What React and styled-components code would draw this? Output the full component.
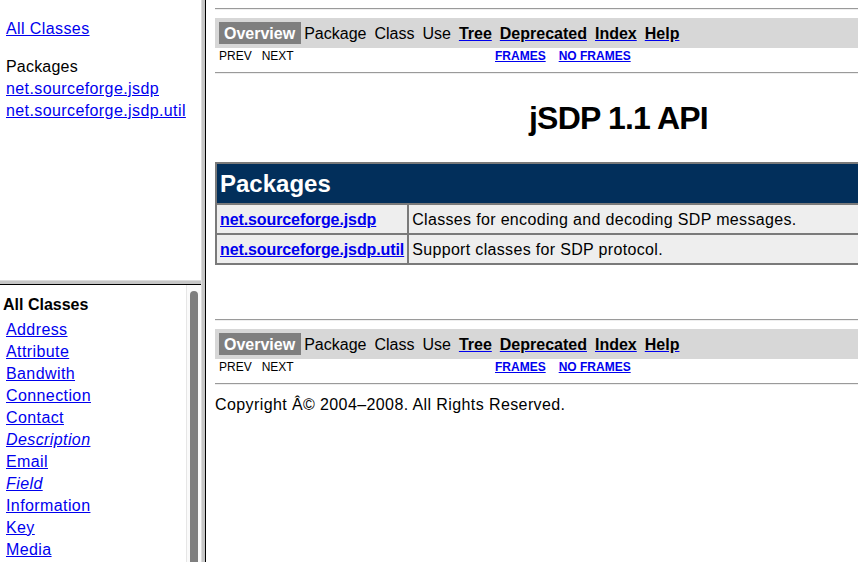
import React from "react"
import styled, { createGlobalStyle } from "styled-components"

const GlobalStyle = createGlobalStyle`
	html, body {
		margin: 0;
		padding: 0;
		background: #ffffff;
		font-family: "Liberation Sans", Arial, Helvetica, sans-serif;
		color: #000000;
	}
`

const packages = [
	{ name: "net.sourceforge.jsdp", desc: "Classes for encoding and decoding SDP messages." },
	{ name: "net.sourceforge.jsdp.util", desc: "Support classes for SDP protocol." },
]

const classes = [
	{ name: "Address" },
	{ name: "Attribute" },
	{ name: "Bandwith" },
	{ name: "Connection" },
	{ name: "Contact" },
	{ name: "Description", iface: true },
	{ name: "Email" },
	{ name: "Field", iface: true },
	{ name: "Information" },
	{ name: "Key" },
	{ name: "Media" },
]

const navLinks = ["Tree", "Deprecated", "Index", "Help"]

function NavBlock() {
	return (
		<>
			<NavBar>
				<NavItem $active>Overview</NavItem>
				<NavItem>Package</NavItem>
				<NavItem>Class</NavItem>
				<NavItem>Use</NavItem>
				{navLinks.map((l) => (
					<NavItem key={l}>
						<NavLink href="#">
							<span>{l}</span>
						</NavLink>
					</NavItem>
				))}
			</NavBar>
			<SubRow>
				<SubCell>
					<span>PREV</span>
					<SubGap />
					<span>NEXT</span>
				</SubCell>
				<SubCell>
					<SubLink href="#">FRAMES</SubLink>
					<SubGap $wide />
					<SubLink href="#">NO FRAMES</SubLink>
				</SubCell>
			</SubRow>
		</>
	)
}

export default function App() {
	return (
		<>
			<GlobalStyle />
			<Frames>
				<LeftColumn>
					<TopPane>
						<PaneLink href="#">All Classes</PaneLink>
						<PaneTitle>Packages</PaneTitle>
						{packages.map((p) => (
							<PaneLink key={p.name} href="#">
								{p.name}
							</PaneLink>
						))}
					</TopPane>
					<HDivider />
					<BottomPane>
						<ClassList>
							<ListHeading>All Classes</ListHeading>
							{classes.map((c) => (
								<PaneLink key={c.name} href="#" $italic={c.iface}>
									{c.name}
								</PaneLink>
							))}
						</ClassList>
						<ScrollTrack>
							<ScrollThumb />
						</ScrollTrack>
					</BottomPane>
				</LeftColumn>
				<VDivider />
				<RightFrame>
					<Page>
						<Rule />
						<NavBlock />
						<Rule $gap="9px" />
						<Title>jSDP 1.1 API</Title>
						<PackageTable>
							<thead>
								<tr>
									<HeadCell colSpan={2}>Packages</HeadCell>
								</tr>
							</thead>
							<tbody>
								{packages.map((p) => (
									<tr key={p.name}>
										<NameCell>
											<TableLink href="#">{p.name}</TableLink>
										</NameCell>
										<DescCell>{p.desc}</DescCell>
									</tr>
								))}
							</tbody>
						</PackageTable>
						<Rule $gap="54px" />
						<NavBlock />
						<Rule $gap="9px" />
						<Copyright>Copyright Â© 2004–2008. All Rights Reserved.</Copyright>
					</Page>
				</RightFrame>
			</Frames>
		</>
	)
}

const Frames = styled.div`
	display: grid;
	grid-template-columns: 201px 4px 1fr;
	height: 100vh;
	overflow: hidden;
`

const LeftColumn = styled.div`
	display: flex;
	flex-direction: column;
	min-height: 0;
	overflow: hidden;
`

const TopPane = styled.div`
	height: 280px;
	box-sizing: border-box;
	padding: 18px 0 0 6px;
	display: flex;
	flex-direction: column;
	align-items: flex-start;

	a:first-child {
		margin-bottom: 16px;
	}
`

const PaneLink = styled.a`
	font-size: 16px;
	line-height: 22px;
	letter-spacing: 0.4px;
	color: #0000ee;
	text-decoration: underline;
	font-style: ${(p) => (p.$italic ? "italic" : "normal")};
	white-space: nowrap;
`

const PaneTitle = styled.div`
	font-size: 16px;
	line-height: 22px;
	letter-spacing: 0.2px;
`

const HDivider = styled.div`
	height: 4px;
	background: #c6c6c6;
	border-top: 1px solid #dcdcdc;
	box-sizing: border-box;
`

const BottomPane = styled.div`
	flex: 1;
	min-height: 0;
	border-top: 1px solid #000000;
	display: flex;
	overflow: hidden;
`

const ClassList = styled.div`
	flex: 1;
	padding: 9px 0 0 6px;
	display: flex;
	flex-direction: column;
	align-items: flex-start;
`

const ListHeading = styled.div`
	font-size: 16px;
	font-weight: bold;
	line-height: 22px;
	margin: 0 0 3px -3px;
`

const ScrollTrack = styled.div`
	width: 15px;
	background: #fafafa;
	border-left: 1px solid #e6e6e6;
	box-sizing: border-box;
	padding: 6px 3px 0 3px;
	display: flex;
`

const ScrollThumb = styled.div`
	flex: 1;
	background: #7f7f7f;
	border-radius: 4px 4px 0 0;
`

const VDivider = styled.div`
	background: #c6c6c6;
	border-left: 1px solid #dcdcdc;
`

const RightFrame = styled.div`
	border-left: 1px solid #000000;
	overflow: hidden;
	padding: 8px 0 0 9px;
`

const Page = styled.div`
	width: 807px;
`

const Rule = styled.div`
	height: 2px;
	box-sizing: border-box;
	border-top: 1px solid #9a9a9a;
	border-bottom: 1px solid #eeeeee;
	margin-top: ${(p) => p.$gap || "0"};
	margin-bottom: 8px;
`

const NavBar = styled.div`
	display: flex;
	align-items: center;
	height: 30px;
	padding-left: 4px;
	background: #d7d7d7;
	font-size: 16px;
`

const NavItem = styled.div`
	padding: ${(p) => (p.$active ? "0 6px 0 5px" : "0 4px")};
	height: 22px;
	line-height: 24px;
	background: ${(p) => (p.$active ? "#7f7f7f" : "transparent")};
	color: ${(p) => (p.$active ? "#ffffff" : "#000000")};
	font-weight: ${(p) => (p.$active ? "bold" : "normal")};
	margin-right: ${(p) => (p.$active ? "-1px" : "0")};
`

const NavLink = styled.a`
	color: #0000ee;
	font-weight: bold;
	text-decoration: underline;

	span {
		color: #000000;
	}
`

const SubRow = styled.div`
	display: grid;
	grid-template-columns: 276px 1fr;
	height: 15px;
	line-height: 17px;
	font-size: 12px;
`

const SubCell = styled.div`
	padding-left: 4px;
	white-space: nowrap;
`

const SubGap = styled.span`
	display: inline-block;
	width: ${(p) => (p.$wide ? "13px" : "10px")};
`

const SubLink = styled.a`
	color: #0000ee;
	font-weight: bold;
	text-decoration: underline;
`

const Title = styled.h1`
	margin: 26px 0 25px;
	text-align: center;
	font-size: 32px;
	line-height: 37px;
	font-weight: bold;
	letter-spacing: -0.8px;
`

const PackageTable = styled.table`
	width: 100%;
	border-collapse: collapse;
	border: 2px solid #7a7a7a;
	font-size: 16px;

	td, th {
		border: 2px solid #7a7a7a;
	}
`

const HeadCell = styled.th`
	background: #022f5b;
	color: #ffffff;
	text-align: left;
	font-size: 24px;
	font-weight: bold;
	line-height: 28px;
	padding: 6px 3px 5px;
`

const NameCell = styled.td`
	width: 1%;
	white-space: nowrap;
	background: #eeeeee;
	padding: 4px 3px 3px;
	line-height: 21px;
`

const DescCell = styled.td`
	background: #eeeeee;
	padding: 4px 3px 3px;
	line-height: 21px;
	letter-spacing: 0.33px;
`

const TableLink = styled.a`
	color: #0000ee;
	font-weight: bold;
	text-decoration: underline;
	letter-spacing: -0.1px;
`

const Copyright = styled.div`
	margin-top: 11px;
	font-size: 16px;
	line-height: 18px;
	letter-spacing: 0.4px;
`
